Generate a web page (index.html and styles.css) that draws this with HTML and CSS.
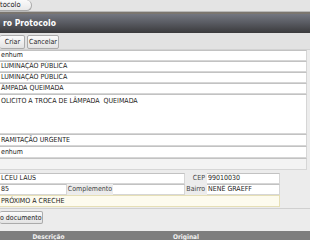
FILE: index.html
```html
<!doctype html>
<html>
<head>
<meta charset="utf-8"/>
<title>Protocolo</title>
<link rel="stylesheet" href="styles.css">
</head>
<body>
<div class="page">
	<div class="crumbs">
		<span class="tab">tocolo</span>
	</div>
	<div class="stripe"></div>
	<div class="title">ro Protocolo</div>
	<div class="toolbar">
		<button class="btn btn-criar">Criar</button>
		<button class="btn btn-cancel">Cancelar</button>
	</div>
	<div class="form">
		<div class="field">enhum</div>
		<div class="field">LUMINAÇÃO PÚBLICA</div>
		<div class="field">LUMINAÇÃO PÚBLICA</div>
		<div class="field">ÂMPADA QUEIMADA</div>
		<div class="field area">OLICITO A TROCA DE LÂMPADA  QUEIMADA</div>
		<div class="field tall">RAMITAÇÃO URGENTE</div>
		<div class="field tall">enhum</div>
		<div class="field tall empty"></div>
		<div class="address">
			<div class="field span3">LCEU LAUS</div>
			<label class="lbl">CEP</label>
			<div class="field">99010030</div>
			<div class="field">85</div>
			<label class="lbl center">Complemento</label>
			<div class="field"></div>
			<label class="lbl">Bairro</label>
			<div class="field">NENÊ GRAEFF</div>
			<div class="field span5 note">PRÓXIMO A CRECHE</div>
		</div>
	</div>
	<div class="actions">
		<button class="btn btn-doc">o documento</button>
	</div>
	<div class="thead">
		<div class="th th-desc">Descrição</div>
		<div class="th th-orig">Original</div>
	</div>
</div>
</body>
</html>
```

FILE: styles.css
```css
body {
	margin: 0;
	background: #ececec;
	font-family: "DejaVu Sans Condensed", "DejaVu Sans", sans-serif;
	font-size: 7px;
	color: #222;
}
.page {
	width: 310px;
	height: 240px;
	overflow: hidden;
}
.crumbs {
	height: 11px;
	background: #e4e4e4;
	border-bottom: 1px solid #b9b9b9;
}
.tab {
	display: inline-block;
	box-sizing: border-box;
	width: 32px;
	height: 11px;
	line-height: 10px;
	font-size: 7.5px;
	background: linear-gradient(#fafafa, #e9e9e9);
	border: 1px solid #a9a9a9;
	border-left: none;
	border-top: none;
	border-radius: 0 7px 7px 0;
}
.stripe {
	height: 2px;
	background: #7b766f;
}
.title {
	height: 19px;
	line-height: 19px;
	padding-left: 3px;
	background: linear-gradient(#737680, #5a5c63 45%, #3a3a3c);
	color: #fff;
	font-weight: bold;
	font-size: 8.5px;
}
.toolbar {
	display: flex;
	gap: 2px;
	height: 17px;
	box-sizing: border-box;
	padding-top: 2px;
	background: #e2e2e2;
	border-bottom: 1px solid #d2d2d2;
}
.btn {
	box-sizing: border-box;
	height: 14px;
	padding: 0;
	margin: 0;
	font-family: inherit;
	font-size: 7px;
	color: #222;
	background: linear-gradient(#fbfbfb, #e3e3e3);
	border: 1px solid #ababab;
	border-radius: 2px;
}
.btn-criar {
	width: 25px;
	border-left: none;
	text-align: right;
	padding-right: 4px;
}
.btn-cancel {
	width: 32px;
}
.form {
	display: flex;
	flex-direction: column;
	width: 307px;
	background: #ececec;
}
.field {
	box-sizing: border-box;
	height: 11px;
	line-height: 9px;
	padding-left: 1px;
	background: #fff;
	border: 1px solid #d6d6d6;
	border-top-color: #c2c2c2;
	border-left: none;
	white-space: pre;
	overflow: hidden;
}
.area {
	height: 40px;
	padding-top: 2px;
}
.tall {
	height: 12px;
	line-height: 10px;
}
.empty {
	background: #f3f3f3;
}
.address {
	display: grid;
	grid-template-columns: 67px 46px 72px 22px 73px;
	grid-auto-rows: 11px;
	margin-top: 3px;
	width: 281px;
}
.span3 {
	grid-column: span 3;
}
.span5 {
	grid-column: span 5;
}
.lbl {
	line-height: 11px;
	text-align: right;
	padding-right: 2px;
	color: #444;
	white-space: nowrap;
}
.lbl.center {
	text-align: center;
	padding-right: 0;
}
.note {
	background: #fdfbee;
	border: 1px solid #e6dfb6;
	border-left: none;
	height: 12px;
	line-height: 10px;
}
.actions {
	height: 20px;
	margin-top: 2px;
	border-top: 1px solid #d0d0d0;
	padding-top: 2px;
}
.btn-doc {
	width: 43px;
	height: 13px;
	border-left: none;
	text-align: left;
	padding-left: 0;
}
.thead {
	display: flex;
	height: 12px;
	line-height: 12px;
	background: #7e7e7e;
	color: #f2f2f2;
	font-weight: bold;
	font-size: 6.5px;
}
.th-desc {
	width: 97px;
	text-align: center;
}
.th-orig {
	width: 178px;
	text-align: center;
}
```
